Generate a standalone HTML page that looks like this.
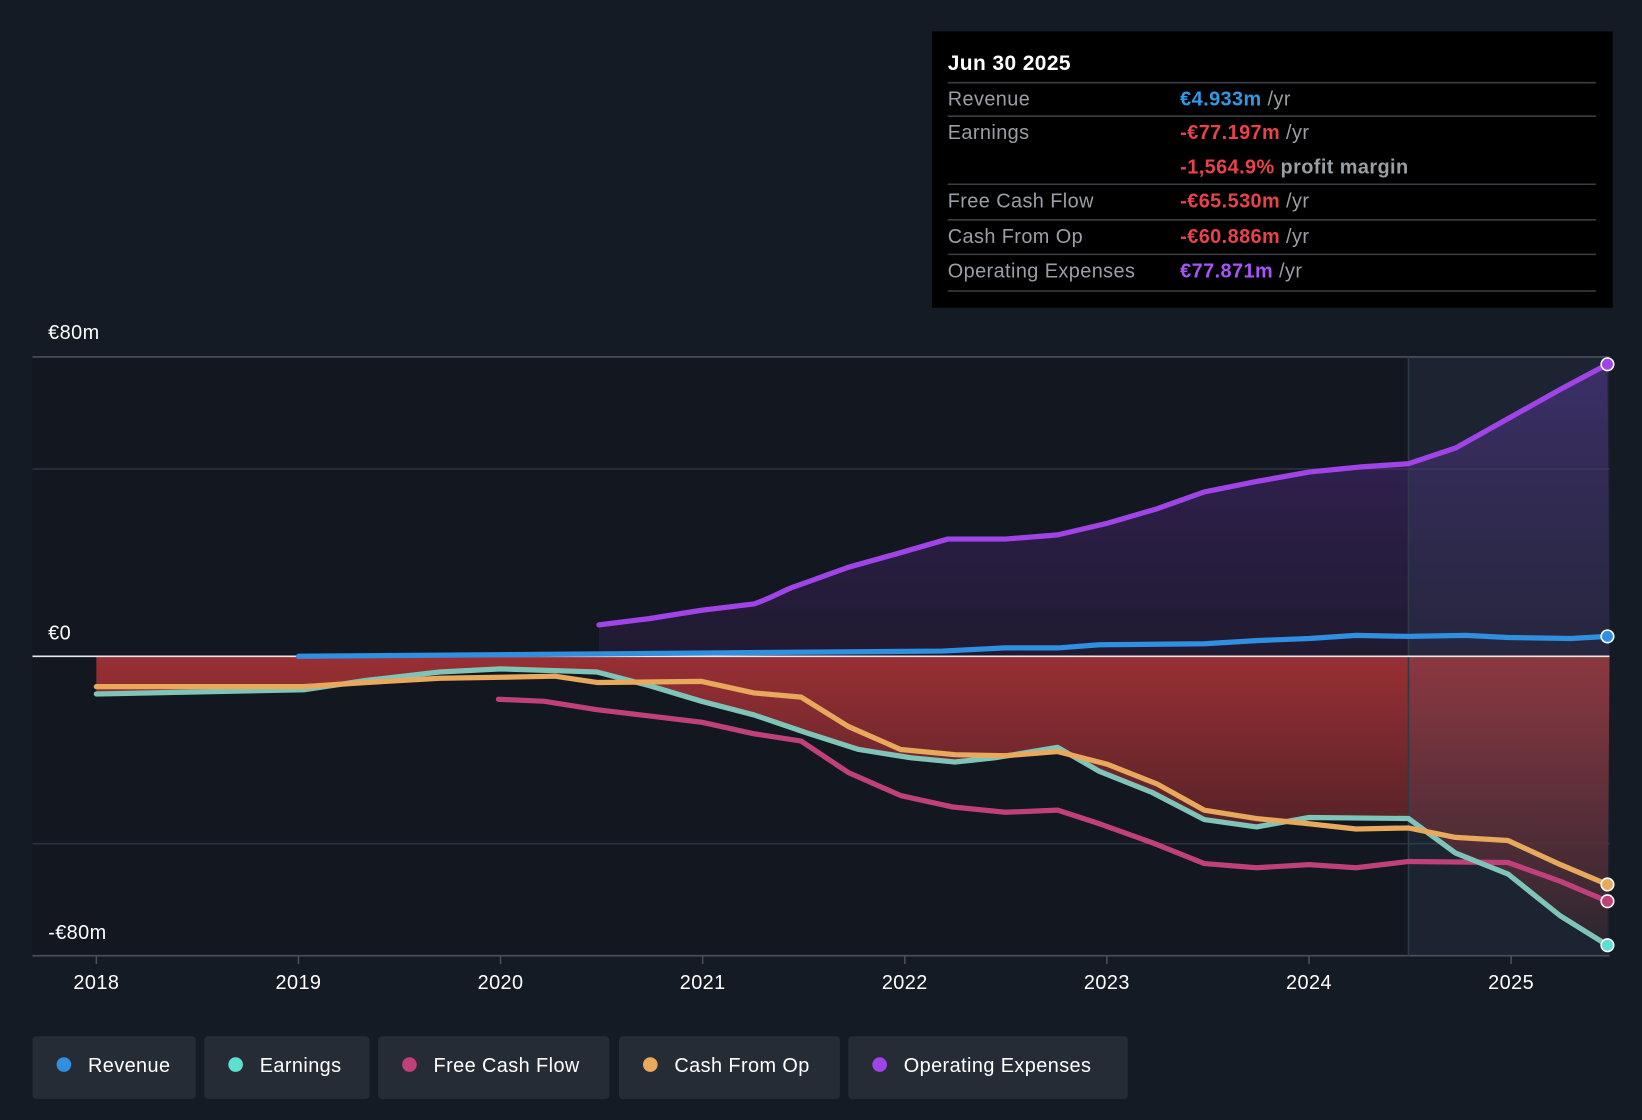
<!DOCTYPE html>
<html><head><meta charset="utf-8"><style>
html,body{margin:0;padding:0;background:#151b24;}
svg{display:block}
text{font-family:"Liberation Sans",sans-serif;letter-spacing:0.4px}
</style></head><body>
<svg width="1642" height="1120" viewBox="0 0 1568 1070" preserveAspectRatio="none" xmlns="http://www.w3.org/2000/svg">
<defs>
<linearGradient id="pg" x1="0" y1="0" x2="0" y2="1"><stop offset="0" stop-color="#5a2f9a" stop-opacity="0.55"/><stop offset="1" stop-color="#3a2050" stop-opacity="0.35"/></linearGradient>
<linearGradient id="rg" x1="0" y1="0" x2="0" y2="1"><stop offset="0" stop-color="#a83236"/><stop offset="1" stop-color="#2a1a20"/></linearGradient>
</defs>
<rect width="1568" height="1070" fill="#151b24"/>
<rect x="31" y="341" width="1506" height="572" fill="#121720"/>
<g stroke="#2c323c" stroke-width="1.5">
<line x1="31" y1="341" x2="1537" y2="341" stroke="#4a505a"/>
<line x1="31" y1="448" x2="1537" y2="448"/>
<line x1="31" y1="806" x2="1537" y2="806"/>
<line x1="31" y1="913" x2="1537" y2="913" stroke="#4a505a"/>
</g>
<path d="M572,597 L620,591 L670,583 L720,577 C740,570 750,563 760,560 L810,542 L860,528 L905,515 L960,515 L1010,511 L1057,500 L1105,486 L1150,470 L1200,460 L1250,451 L1300,446 L1345,443 L1390,428 L1440,400 L1490,372 L1535,348 L1537,627 L572,627 Z" fill="url(#pg)"/>
<path d="M92,627 L1537,627 L1535,903 L1490,875 L1440,835 L1390,815 L1345,782 L1250,781 L1200,790 L1150,783 L1100,757 L1050,737 L1010,714 L950,724 L912,728 L870,724 L820,716 L770,700 L720,683 L670,670 L620,655 L570,642 L478,639 L420,642 L350,650 L290,659 L92,663 Z" fill="url(#rg)" opacity="0.9"/>
<rect x="1345" y="341" width="192" height="572" fill="#4a6a8a" opacity="0.16"/>
<line x1="1345" y1="341" x2="1345" y2="913" stroke="#2e3a48" stroke-width="1.5"/>
<line x1="31" y1="627" x2="1537" y2="627" stroke="#e8e8e8" stroke-width="1.5"/>
<g fill="none" stroke-width="5" stroke-linejoin="round" stroke-linecap="round">
<path stroke="#a044e8" d="M572,597 L620,591 L670,583 L720,577 C740,570 750,563 760,560 L810,542 L860,528 L905,515 L960,515 L1010,511 L1057,500 L1105,486 L1150,470 L1200,460 L1250,451 L1300,446 L1345,443 L1390,428 L1440,400 L1490,372 L1535,348"/>
<path stroke="#2f8fe0" d="M285,627 L900,622 L960,619 L1010,619 L1050,616 L1150,615 L1200,612 L1250,610 L1295,607 L1345,608 L1400,607 L1440,609 L1500,610 L1535,608"/>
<path stroke="#c0407a" d="M476,668 L520,670 L570,678 L620,684 L670,690 L720,701 L765,708 L810,738 L860,760 L910,771 L960,776 L1010,774 L1050,787 L1100,805 L1150,825 L1200,829 L1250,826 L1295,829 L1345,823 L1440,824 L1490,842 L1535,861"/>
<path stroke="#7fc4b8" d="M92,663 L290,659 L350,650 L420,642 L478,639 L570,642 L620,655 L670,670 L720,683 L770,700 L820,716 L870,724 L912,728 L950,724 L1010,714 L1050,737 L1100,757 L1150,783 L1200,790 L1250,781 L1345,782 L1390,815 L1440,835 L1490,875 L1535,903"/>
<path stroke="#e8a95c" d="M92,656 L290,656 L350,652 L420,648 L478,647 L530,646 L570,652 L670,651 L720,662 L765,666 L810,694 L860,716 L912,721 L960,722 L1010,718 L1057,730 L1105,749 L1150,774 L1200,782 L1250,787 L1295,792 L1345,791 L1390,800 L1440,803 L1490,826 L1535,845"/>
</g>
<g stroke="#fff" stroke-width="1.5">
<circle cx="1535" cy="348" r="6" fill="#a044e8"/>
<circle cx="1535" cy="608" r="6" fill="#2f8fe0"/>
<circle cx="1535" cy="845" r="6" fill="#e8a95c"/>
<circle cx="1535" cy="861" r="6" fill="#c0407a"/>
<circle cx="1535" cy="903" r="6" fill="#5ee0d0"/>
</g>
<g fill="#fff" font-size="19">
<text x="46" y="324">€80m</text>
<text x="46" y="611">€0</text>
<text x="46" y="897">-€80m</text>
</g>
<g fill="#fff" font-size="19" text-anchor="middle">
<text x="92" y="945">2018</text><text x="285" y="945">2019</text><text x="478" y="945">2020</text><text x="671" y="945">2021</text><text x="864" y="945">2022</text><text x="1057" y="945">2023</text><text x="1250" y="945">2024</text><text x="1443" y="945">2025</text>
</g>
<g stroke="#4a505a" stroke-width="1.5">
<line x1="92" y1="913" x2="92" y2="921"/><line x1="285" y1="913" x2="285" y2="921"/><line x1="478" y1="913" x2="478" y2="921"/><line x1="671" y1="913" x2="671" y2="921"/><line x1="864" y1="913" x2="864" y2="921"/><line x1="1057" y1="913" x2="1057" y2="921"/><line x1="1250" y1="913" x2="1250" y2="921"/><line x1="1443" y1="913" x2="1443" y2="921"/>
</g>
<rect x="890" y="30" width="650" height="264" fill="#000"/>
<g stroke="#3a3f46" stroke-width="1.5">
<line x1="905" y1="79" x2="1524" y2="79"/><line x1="905" y1="111" x2="1524" y2="111"/><line x1="905" y1="176" x2="1524" y2="176"/><line x1="905" y1="210" x2="1524" y2="210"/><line x1="905" y1="243" x2="1524" y2="243"/><line x1="905" y1="278" x2="1524" y2="278"/>
</g>
<text x="905" y="67" fill="#fff" font-size="20" font-weight="bold">Jun 30 2025</text>
<g font-size="19" fill="#9a9fa6">
<text x="905" y="101">Revenue</text><text x="905" y="133">Earnings</text><text x="905" y="198">Free Cash Flow</text><text x="905" y="232">Cash From Op</text><text x="905" y="265">Operating Expenses</text>
</g>
<g font-size="19" font-weight="bold">
<text x="1127" y="101"><tspan fill="#2f9ae8">€4.933m</tspan><tspan fill="#9a9fa6" font-weight="normal"> /yr</tspan></text>
<text x="1127" y="133"><tspan fill="#e8434a">-€77.197m</tspan><tspan fill="#9a9fa6" font-weight="normal"> /yr</tspan></text>
<text x="1127" y="166"><tspan fill="#e8434a">-1,564.9%</tspan><tspan fill="#9a9fa6"> profit margin</tspan></text>
<text x="1127" y="198"><tspan fill="#e8434a">-€65.530m</tspan><tspan fill="#9a9fa6" font-weight="normal"> /yr</tspan></text>
<text x="1127" y="232"><tspan fill="#e8434a">-€60.886m</tspan><tspan fill="#9a9fa6" font-weight="normal"> /yr</tspan></text>
<text x="1127" y="265"><tspan fill="#a855f7">€77.871m</tspan><tspan fill="#9a9fa6" font-weight="normal"> /yr</tspan></text>
</g>
<g fill="#262c36">
<rect x="31" y="990" width="156" height="60" rx="4"/><rect x="195" y="990" width="158" height="60" rx="4"/><rect x="361" y="990" width="221" height="60" rx="4"/><rect x="591" y="990" width="211" height="60" rx="4"/><rect x="810" y="990" width="267" height="60" rx="4"/>
</g>
<circle cx="61" cy="1017" r="7" fill="#2f8fe0"/><circle cx="225" cy="1017" r="7" fill="#5ee0d0"/><circle cx="391" cy="1017" r="7" fill="#c0407a"/><circle cx="621" cy="1017" r="7" fill="#e8a95c"/><circle cx="840" cy="1017" r="7" fill="#a044e8"/>
<g fill="#fff" font-size="19">
<text x="84" y="1024">Revenue</text><text x="248" y="1024">Earnings</text><text x="414" y="1024">Free Cash Flow</text><text x="644" y="1024">Cash From Op</text><text x="863" y="1024">Operating Expenses</text>
</g>
</svg>
</body></html>
